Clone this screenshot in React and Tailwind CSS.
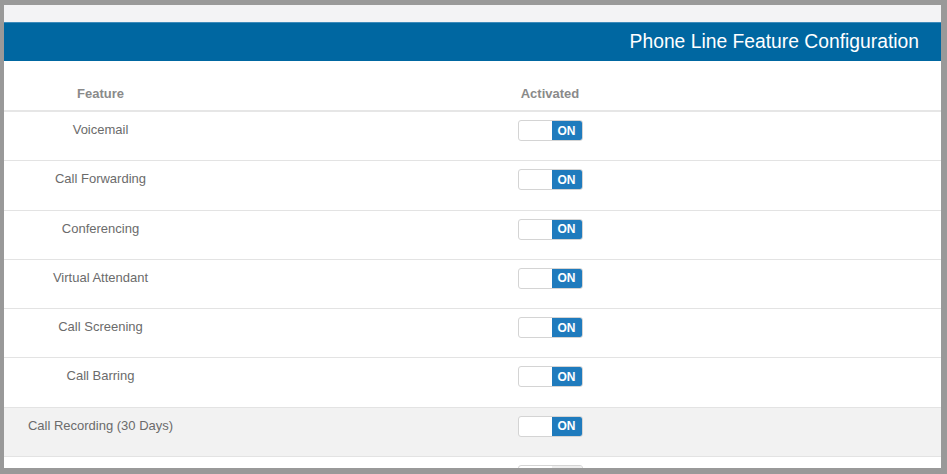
const features = [
  { name: "Voicemail", on: true },
  { name: "Call Forwarding", on: true },
  { name: "Conferencing", on: true },
  { name: "Virtual Attendant", on: true },
  { name: "Call Screening", on: true },
  { name: "Call Barring", on: true },
  { name: "Call Recording (30 Days)", on: true, shaded: true },
];

const Toggle = ({ on }) => (
  <div className="flex h-[21px] w-[65px] overflow-hidden rounded-[3px] border border-[#d4d4d4] bg-white">
    <div className="w-[33px]" />
    {on ? (
      <div className="flex flex-1 items-center justify-center bg-[#1f7bbd] text-[12px] font-bold text-white">
        ON
      </div>
    ) : (
      <div className="flex-1 bg-[#eeeeee]" />
    )}
  </div>
);

const App = () => {
  return (
    <div
      className="h-[474px] w-[947px] overflow-hidden bg-[#999999] pb-[6px] pl-[4px] pr-[6px] pt-[5px]"
      style={{ fontFamily: '"Liberation Sans", Arial, sans-serif' }}
    >
      <div className="h-full overflow-hidden bg-white">
        <div className="h-[17px] bg-[#f3f3f5]" />
        <div className="flex h-[39px] items-center justify-end border-t border-[#3d8bbb] bg-[#0067a1] pr-[22px]">
          <h1 className="text-[19.3px] text-white">Phone Line Feature Configuration</h1>
        </div>

        <div className="grid h-[51px] grid-cols-[193px_706px_1fr] items-end border-b-2 border-[#e6e6e6] pb-[7px] text-[13px] font-bold text-[#8a8a8a]">
          <div className="text-center">Feature</div>
          <div className="text-center">Activated</div>
        </div>

        {features.map((f) => (
          <div
            key={f.name}
            className={`grid h-[49.3px] grid-cols-[193px_706px_1fr] items-start border-b border-[#e3e3e3] pt-[8px] text-[13px] text-[#6b6b6b] ${
              f.shaded ? "bg-[#f2f2f2]" : "bg-white"
            }`}
          >
            <div className="text-center">{f.name}</div>
            <div className="flex justify-center">
              <Toggle on={f.on} />
            </div>
          </div>
        ))}

        {/* next row, only its switch edge shows above the frame */}
        <div className="grid h-[49px] grid-cols-[193px_706px_1fr] items-start pt-[8px]">
          <div />
          <div className="flex justify-center">
            <Toggle on={false} />
          </div>
        </div>
      </div>
    </div>
  );
};

export default App;
